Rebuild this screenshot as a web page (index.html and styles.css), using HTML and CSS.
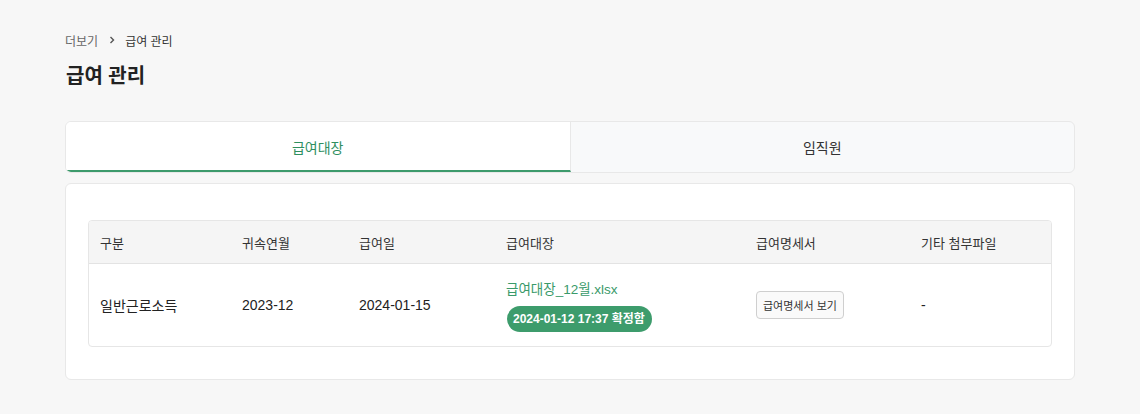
FILE: index.html
```html
<!DOCTYPE html>
<html lang="ko">
<head>
<meta charset="utf-8">
<link rel="stylesheet" href="styles.css">
</head>
<body>
<div class="page">
  <nav class="crumbs">
    <span class="crumb">더보기</span>
    <svg class="chev" width="8" height="8" viewBox="0 0 8 8"><path d="M2.5 1 L5.5 4 L2.5 7" fill="none" stroke="#555" stroke-width="1.4"/></svg>
    <span class="crumb current">급여 관리</span>
  </nav>
  <h1 class="title">급여 관리</h1>

  <div class="tabs">
    <div class="tab active">급여대장</div>
    <div class="tab">임직원</div>
  </div>

  <div class="card">
    <div class="table">
      <div class="row head">
        <div class="c c1">구분</div>
        <div class="c c2">귀속연월</div>
        <div class="c c3">급여일</div>
        <div class="c c4">급여대장</div>
        <div class="c c5">급여명세서</div>
        <div class="c c6">기타 첨부파일</div>
      </div>
      <div class="row body">
        <div class="c c1">일반근로소득</div>
        <div class="c c2">2023-12</div>
        <div class="c c3">2024-01-15</div>
        <div class="c c4 stack">
          <a class="file">급여대장_12월.xlsx</a>
          <span class="badge">2024-01-12 17:37 확정함</span>
        </div>
        <div class="c c5"><button class="btn">급여명세서 보기</button></div>
        <div class="c c6">-</div>
      </div>
    </div>
  </div>
</div>
</body>
</html>
```
FILE: styles.css
```css
* { box-sizing: border-box; }
html, body { margin: 0; padding: 0; }
body {
  background: #f7f7f7;
  font-family: "Liberation Sans", "Noto Sans CJK KR", sans-serif;
  color: #222;
  width: 1140px;
  height: 414px;
  overflow: hidden;
}
.page { padding: 31px 65px 0 65px; }
.crumbs {
  display: flex;
  align-items: center;
  height: 18px;
  font-size: 12px;
  color: #555;
}
.crumb { color: #666; }
.crumb.current { color: #333; }
.chev { margin: 0 9px 0 10px; }
.title {
  margin: 13px 0 0 1px;
  font-size: 20px;
  font-weight: 700;
  color: #222;
  line-height: 28px;
  height: 28px;
}
.tabs {
  margin-top: 31px;
  display: flex;
  height: 52px;
  border: 1px solid #e8e8e8;
  border-radius: 6px;
  overflow: hidden;
  background: #f8f9fa;
}
.tab {
  flex: 1;
  display: flex;
  align-items: center;
  justify-content: center;
  font-size: 14px;
  color: #333;
}
.tab.active {
  background: #fff;
  color: #2f8f5f;
  border-right: 1px solid #e8e8e8;
  border-bottom: 2px solid #3d9a6c;
  padding-top: 2px;
}
.card {
  margin-top: 10px;
  background: #fff;
  border: 1px solid #e8e8e8;
  border-radius: 6px;
  padding: 36px 22px 32px 22px;
}
.table {
  border: 1px solid #e6e6e6;
  border-radius: 4px;
  overflow: hidden;
}
.row { display: flex; }
.row.head {
  background: #f5f5f5;
  height: 43px;
  border-bottom: 1px solid #e3e3e3;
  font-size: 13px;
  color: #333;
}
.row.body {
  height: 82px;
  font-size: 14px;
  color: #222;
}
.c {
  display: flex;
  align-items: center;
  padding-left: 11px;
}
.c1 { width: 142px; }
.c2 { width: 117px; }
.c3 { width: 147px; }
.c4 { width: 250px; }
.c5 { width: 165px; }
.c6 { flex: 1; }
.stack {
  flex-direction: column;
  align-items: flex-start;
  justify-content: center;
  gap: 7px;
  padding-top: 2px;
}
.file {
  color: #3a9a6a;
  font-size: 13.5px;
  line-height: 18px;
}
.badge {
  display: inline-block;
  background: #3d9c6c;
  color: #fff;
  font-size: 12px;
  font-weight: 700;
  height: 26px;
  line-height: 26px;
  padding: 0 7px 0 6px;
  border-radius: 13px;
  margin-left: 1px;
}
.btn {
  font-family: inherit;
  font-size: 11px;
  color: #333;
  background: #fafafa;
  border: 1px solid #cfcfcf;
  border-radius: 4px;
  height: 28px;
  padding: 0 6px;
  margin-left: 0;
}
```
